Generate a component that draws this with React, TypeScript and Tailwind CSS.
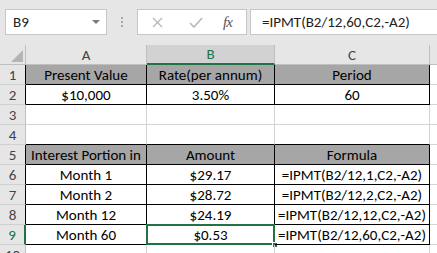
import React from "react";

const font = { fontFamily: "Carlito, Calibri, Lato, 'Liberation Sans', sans-serif" };

type Cell = { text: string; cls: string; selected?: boolean };
type Row = { n: string; head: string; cells: Cell[] };

const G = "border-[#d4d4d4]";
const T = "border-black";
const hdr = "bg-[#a6a6a6] text-[#262626]";

const rows: Row[] = [
  {
    n: "1",
    head: "border-r-black",
    cells: [
      { text: "Present Value", cls: `${T} ${hdr}` },
      { text: "Rate(per annum)", cls: `${T} ${hdr}` },
      { text: "Period", cls: `${T} ${hdr}` },
    ],
  },
  {
    n: "2",
    head: "border-r-black",
    cells: [
      { text: "$10,000", cls: T },
      { text: "3.50%", cls: T },
      { text: "60", cls: T },
    ],
  },
  {
    n: "3",
    head: "border-r-[#bfbfbf]",
    cells: [
      { text: "", cls: G },
      { text: "", cls: G },
      { text: "", cls: G },
    ],
  },
  {
    n: "4",
    head: "border-r-[#bfbfbf]",
    cells: [
      { text: "", cls: "border-r-[#d4d4d4] border-b-black" },
      { text: "", cls: "border-r-[#d4d4d4] border-b-black" },
      { text: "", cls: "border-r-[#d4d4d4] border-b-black" },
    ],
  },
  {
    n: "5",
    head: "border-r-black",
    cells: [
      { text: "Interest Portion in", cls: `${T} ${hdr}` },
      { text: "Amount", cls: `${T} ${hdr}` },
      { text: "Formula", cls: `${T} ${hdr}` },
    ],
  },
  {
    n: "6",
    head: "border-r-black",
    cells: [
      { text: "Month 1", cls: T },
      { text: "$29.17", cls: T },
      { text: "=IPMT(B2/12,1,C2,-A2)", cls: T },
    ],
  },
  {
    n: "7",
    head: "border-r-black",
    cells: [
      { text: "Month 2", cls: T },
      { text: "$28.72", cls: T },
      { text: "=IPMT(B2/12,2,C2,-A2)", cls: T },
    ],
  },
  {
    n: "8",
    head: "border-r-black",
    cells: [
      { text: "Month 12", cls: T },
      { text: "$24.19", cls: T },
      { text: "=IPMT(B2/12,12,C2,-A2)", cls: T },
    ],
  },
  {
    n: "9",
    head: "border-r-[#217346] bg-[#d2d2d2] text-[#217346]",
    cells: [
      { text: "Month 60", cls: T },
      { text: "$0.53", cls: T, selected: true },
      { text: "=IPMT(B2/12,60,C2,-A2)", cls: T },
    ],
  },
  {
    n: "10",
    head: "border-r-[#bfbfbf]",
    cells: [
      { text: "", cls: G },
      { text: "", cls: G },
      { text: "", cls: G },
    ],
  },
];

const widths = ["w-[121px]", "w-[128px]", "w-[155px]"];

function FormulaBar() {
  return (
    <div className="h-[45px] bg-[#e6e6e6] flex items-start pt-[9px] pl-[5px]">
      <div className="w-[102px] h-[26px] bg-white border border-[#c6c6c6] flex items-center justify-between pl-[7px] pr-[6px] text-[15px] text-[#222]">
        <span>B9</span>
        <svg width="8" height="5" viewBox="0 0 8 5">
          <path d="M0 0 H8 L4 4 Z" fill="#7a7a7a" />
        </svg>
      </div>
      <div className="w-[30px] h-[26px] flex flex-col items-center justify-center gap-[2px]">
        <span className="w-[2px] h-[2px] bg-[#a8a8a8]" />
        <span className="w-[2px] h-[2px] bg-[#a8a8a8]" />
        <span className="w-[2px] h-[2px] bg-[#a8a8a8]" />
      </div>
      <div className="w-[110px] h-[26px] bg-white border border-[#c6c6c6] flex items-center pl-[14px]">
        <svg width="11" height="11" viewBox="0 0 11 11">
          <path d="M1 1 L10 10 M10 1 L1 10" stroke="#b8b8b8" strokeWidth="1.3" />
        </svg>
        <svg width="14" height="11" viewBox="0 0 14 11" className="ml-[26px]">
          <path d="M1 6 L5 10 L13 1" stroke="#b8b8b8" strokeWidth="1.6" fill="none" />
        </svg>
        <span
          className="ml-[20px] text-[15px] italic text-[#555] tracking-[-1px]"
          style={{ fontFamily: "'Liberation Serif', serif" }}
        >
          fx
        </span>
      </div>
      <div className="ml-[3px] flex-1 h-[26px] bg-white border border-[#c6c6c6] border-r-0 flex items-center pl-[11px] text-[15px] text-[#222]">
        =IPMT(B2/12,60,C2,-A2)
      </div>
    </div>
  );
}

function ColumnHeader() {
  return (
    <div className="h-[20px] flex bg-[#e6e6e6] text-[15px] text-[#444] leading-none">
      <div className="w-[26px] h-full border-r border-b border-[#bfbfbf] flex items-end justify-end pr-[2px] pb-[2px]">
        <svg width="12" height="12" viewBox="0 0 12 12">
          <path d="M12 0 V12 H0 Z" fill="#b4b4b4" />
        </svg>
      </div>
      <div className="w-[121px] h-full border-r border-b border-[#bfbfbf] flex items-center justify-center pt-[1px]">A</div>
      <div className="w-[128px] h-full border-r border-[#bfbfbf] border-b-2 border-b-[#217346] bg-[#d2d2d2] text-[#217346] flex items-center justify-center pt-[1px]">
        B
      </div>
      <div className="w-[155px] h-full border-r border-b border-[#bfbfbf] flex items-center justify-center pt-[1px]">C</div>
      <div className="flex-1 h-full border-b border-[#bfbfbf]" />
    </div>
  );
}

export default function App() {
  return (
    <div className="w-[437px] h-[253px] overflow-hidden bg-white" style={font}>
      <FormulaBar />
      <ColumnHeader />
      {rows.map((r) => (
        <div key={r.n} className="h-[20px] flex text-[15px] leading-none">
          <div
            className={`w-[26px] h-full bg-[#e6e6e6] text-[#444] border-b border-b-[#d0d0d0] flex items-center justify-center pt-[1px] ${
              r.n === "9" ? "border-r-2" : "border-r"
            } ${r.head}`}
          >
            {r.n}
          </div>
          {r.cells.map((c, i) => (
            <div
              key={i}
              className={`${widths[i]} h-full border-r border-b flex items-center justify-center pt-[1px] text-black relative ${c.cls}`}
            >
              {c.text}
              {c.selected && (
                <>
                  <div className="absolute -left-[1px] -top-[1px] -right-[1px] -bottom-[1px] border-2 border-[#217346]" />
                  <div className="absolute -right-[4px] -bottom-[4px] w-[6px] h-[6px] bg-[#217346] border border-white" />
                </>
              )}
            </div>
          ))}
          <div className="flex-1 h-full border-b border-[#d4d4d4]" />
        </div>
      ))}
    </div>
  );
}
